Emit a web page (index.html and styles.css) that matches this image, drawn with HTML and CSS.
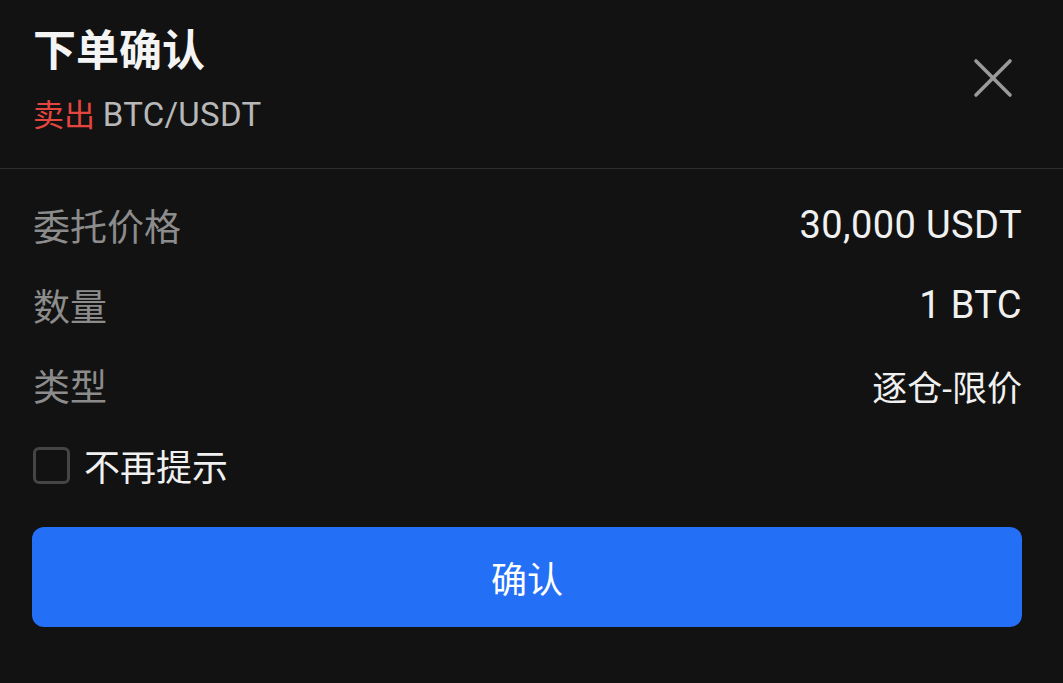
FILE: index.html
```html
<!DOCTYPE html>
<html lang="zh-CN">
<head>
<meta charset="utf-8">
<title>下单确认</title>
<link rel="stylesheet" href="styles.css">
</head>
<body>
<div class="sheet">
  <div class="header">
    <div class="heading">
      <h1 class="title">下单确认</h1>
      <div class="subtitle"><span class="side-sell">卖出</span> <span class="pair">BTC/USDT</span></div>
    </div>
    <button class="close" aria-label="关闭">
      <svg width="40" height="40" viewBox="0 0 40 40"><path d="M3 3 L37 37 M37 3 L3 37" stroke="#9a9a9a" stroke-width="3.6" stroke-linecap="round" fill="none"/></svg>
    </button>
  </div>
  <div class="body">
    <div class="row"><span class="label">委托价格</span><span class="value latin">30,000 USDT</span></div>
    <div class="row"><span class="label">数量</span><span class="value latin">1 BTC</span></div>
    <div class="row"><span class="label">类型</span><span class="value cjk">逐仓-限价</span></div>
    <label class="check-row"><span class="checkbox"></span><span class="check-text">不再提示</span></label>
    <button class="confirm">确认</button>
  </div>
</div>
</body>
</html>
```
FILE: styles.css
```css
* { box-sizing: border-box; }
html, body { margin: 0; padding: 0; }
body {
  background: #121212;
  font-family: Roboto, "Noto Sans CJK SC", sans-serif;
  color: #ededed;
  width: 1063px;
  height: 683px;
  overflow: hidden;
}
.sheet { width: 1063px; }
.header {
  display: flex;
  justify-content: space-between;
  align-items: flex-start;
  padding: 25px 41px 0 33px;
  height: 169px;
  border-bottom: 1px solid #2e2e2e;
}
.title {
  margin: 0;
  font-size: 43px;
  line-height: 52px;
  font-weight: 700;
  color: #f4f4f4;
}
.subtitle {
  margin-top: 18px;
  font-size: 31px;
  line-height: 40px;
}
.side-sell { color: #e4463f; }
.pair { color: #b8b8b8; font-size: 33px; letter-spacing: 0.3px; }
.close {
  background: none;
  border: 0;
  padding: 0;
  margin: 33px 9px 0 0;
  width: 40px;
  height: 40px;
  display: flex;
}
.body {
  padding: 16px 41px 0 32px;
}
.row {
  display: flex;
  justify-content: space-between;
  align-items: center;
  height: 80px;
  font-size: 37px;
  padding-left: 1px;
}
.label { color: #8c8c8c; }
.value { color: #f0f0f0; }
.value.latin { font-size: 38px; letter-spacing: 0.4px; }
.value.cjk { font-size: 35px; }
.check-row {
  display: flex;
  align-items: center;
  height: 80px;
  padding-left: 1px;
  gap: 14px;
}
.checkbox {
  width: 37px;
  height: 37px;
  border: 3px solid #454545;
  border-radius: 6px;
}
.check-text {
  font-size: 36px;
  color: #f0f0f0;
}
.confirm {
  margin-top: 22px;
  width: 990px;
  height: 100px;
  border: 0;
  border-radius: 12px;
  background: #236ff6;
  color: #ffffff;
  font-family: Roboto, "Noto Sans CJK SC", sans-serif;
  font-size: 36px;
  display: flex;
  align-items: center;
  justify-content: center;
}
```
